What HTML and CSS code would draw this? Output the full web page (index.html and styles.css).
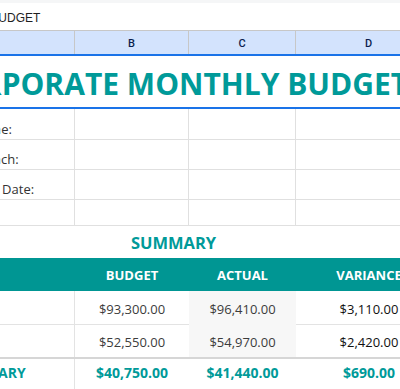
FILE: index.html
```html
<!DOCTYPE html>
<html>
<head>
<meta charset="utf-8">
<link rel="stylesheet" href="styles.css">
</head>
<body>
<div class="app">
  <div class="topstrip"></div>
  <div class="formula"><span class="formula-text">CORPORATE MONTHLY BUDGET</span></div>
  <div class="sheet">
    <div class="row colhead">
      <div class="ch">A</div><div class="ch">B</div><div class="ch">C</div><div class="ch">D</div>
    </div>
    <div class="title-row"><div class="title">CORPORATE MONTHLY BUDGET</div></div>
    <div class="row info h31">
      <div class="cell label">Company Name:</div><div class="cell"></div><div class="cell"></div><div class="cell"></div>
    </div>
    <div class="row info h30">
      <div class="cell label">Company Branch:</div><div class="cell"></div><div class="cell"></div><div class="cell"></div>
    </div>
    <div class="row info h30">
      <div class="cell label">Budget Report Date:</div><div class="cell"></div><div class="cell"></div><div class="cell"></div>
    </div>
    <div class="row info h26">
      <div class="cell label"></div><div class="cell"></div><div class="cell"></div><div class="cell"></div>
    </div>
    <div class="summary-title">SUMMARY</div>
    <div class="row thead">
      <div class="th th-left">DESCRIPTION</div><div class="th">BUDGET</div><div class="th">ACTUAL</div><div class="th">VARIANCE</div>
    </div>
    <div class="row data h34">
      <div class="dc first">Income</div><div class="dc">$93,300.00</div><div class="dc actual">$96,410.00</div><div class="dc var">$3,110.00</div>
    </div>
    <div class="row data h32 last">
      <div class="dc first">Expenses</div><div class="dc">$52,550.00</div><div class="dc actual">$54,970.00</div><div class="dc var">$2,420.00</div>
    </div>
    <div class="row total">
      <div class="tc first">SUMMARY</div><div class="tc">$40,750.00</div><div class="tc">$41,440.00</div><div class="tc">$690.00</div>
    </div>
  </div>
</div>
</body>
</html>
```
FILE: styles.css
```css
* { box-sizing: border-box; }
html, body { margin: 0; padding: 0; }
body {
  width: 400px;
  height: 389px;
  overflow: hidden;
  background: #fff;
  font-family: "Open Sans", "Noto Sans", sans-serif;
}
.app { width: 400px; overflow: hidden; }
.topstrip { height: 3px; background: #f5f6f7; }
.formula {
  height: 27px;
  display: flex;
  align-items: center;
  white-space: nowrap;
  overflow: hidden;
  font-family: "Liberation Sans", Arial, sans-serif;
  font-size: 12px;
  color: #1f1f1f;
}
.formula-text { margin-left: -149px; padding-top: 2px; }

.sheet { margin-left: -95px; width: 537px; }
.row {
  display: grid;
  grid-template-columns: 170px 114px 107px 146px;
}

.colhead {
  height: 24px;
  border-top: 1px solid #c7c7c7;
  background: #d3e3fd;
}
.ch {
  display: flex;
  align-items: center;
  justify-content: center;
  border-right: 1px solid #c7c7c7;
  font-family: Roboto, "Liberation Sans", sans-serif;
  font-size: 11px;
  font-weight: 500;
  color: #0b1f4d;
  padding-top: 1px;
}

.title-row {
  height: 55px;
  border-top: 2px solid #1a73e8;
  border-bottom: 2px solid #1a73e8;
  display: flex;
  align-items: center;
  justify-content: center;
  white-space: nowrap;
  overflow: hidden;
}
.title {
  font-size: 30px;
  font-weight: 700;
  color: #009a99;
  padding-top: 3px;
}

.info .cell {
  border-right: 1px solid #e0e0e0;
  border-bottom: 1px solid #e0e0e0;
}
.h31 { height: 31px; }
.h30 { height: 30px; }
.h26 { height: 26px; }
.h34 { height: 34px; }
.h32 { height: 32px; }
.label {
  display: flex;
  align-items: flex-end;
  padding: 0 0 1px 6px;
  font-size: 13px;
  color: #333;
  white-space: nowrap;
  overflow: hidden;
}

.summary-title {
  height: 32px;
  display: flex;
  align-items: center;
  justify-content: center;
  font-size: 16.5px;
  font-weight: 700;
  color: #009a99;
  padding-top: 1px;
}

.thead {
  height: 33px;
  background: #009693;
}
.th {
  display: flex;
  align-items: center;
  justify-content: center;
  color: #fff;
  font-size: 13px;
  font-weight: 700;
  white-space: nowrap;
  padding-top: 1px;
}
.th-left { justify-content: flex-start; padding-left: 7px; }

.dc {
  display: flex;
  align-items: center;
  justify-content: center;
  font-size: 13px;
  color: #3c3c3c;
  border-bottom: 1px solid #e3e3e3;
  white-space: nowrap;
  padding-top: 2px;
}
.dc.first { border-right: 1px solid #e3e3e3; justify-content: flex-start; padding-left: 8px; overflow: hidden; }
.dc.actual { background: #f7f7f7; border-bottom-color: #f7f7f7; }
.dc.var { color: #111; }
.last .dc { border-bottom: none; }

.total {
  height: 32px;
  border-top: 2px solid #d6d6d6;
}
.tc {
  display: flex;
  align-items: center;
  justify-content: center;
  font-size: 14px;
  font-weight: 700;
  color: #009a99;
  white-space: nowrap;
  padding-bottom: 4px;
}
.tc.first { border-right: 1px solid #e3e3e3; }
```
